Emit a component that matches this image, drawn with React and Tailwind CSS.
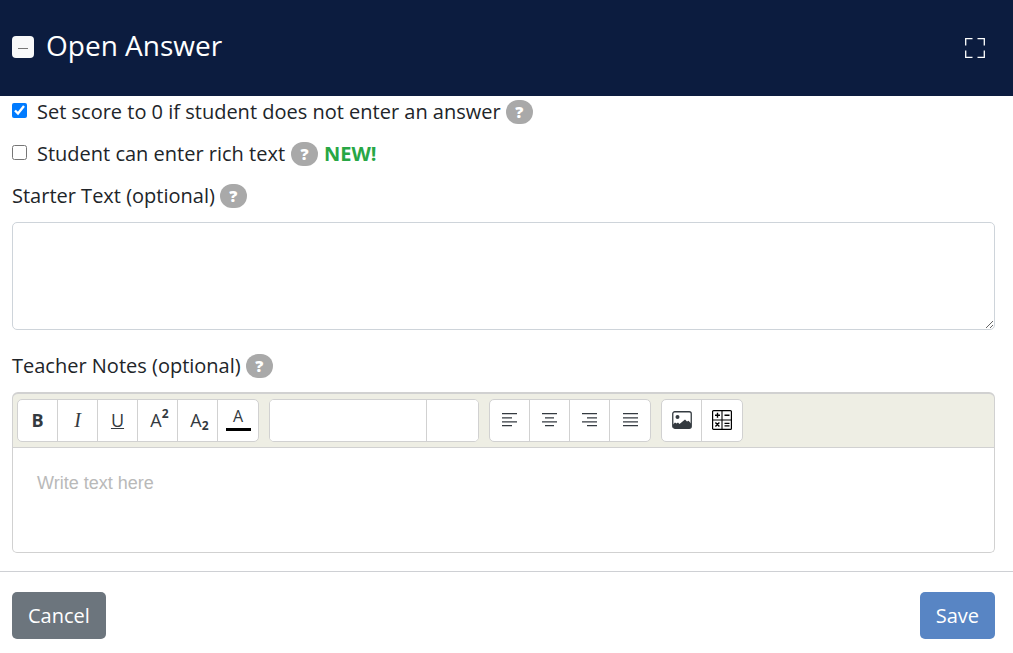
import React, { useState } from 'react';

const HelpBadge = ({ label }) => (
    <button
        type="button"
        aria-label={label}
        className="inline-flex h-6 w-[27px] shrink-0 items-center justify-center rounded-full bg-[#a9a9a9] text-base leading-6 font-extrabold text-white"
    >
        ?
    </button>
);

const ToolGroup = ({ children }) => (
    <div className="flex h-[43px] divide-x divide-[#d1d1d1] overflow-hidden rounded-[5px] border border-[#d1d1d1] bg-white">
        {children}
    </div>
);

const ToolButton = ({ label, children }) => (
    <button
        type="button"
        aria-label={label}
        className="flex w-10 items-center justify-center pb-0.5 text-lg leading-6 text-[#343a40] hover:bg-gray-50"
    >
        {children}
    </button>
);

// each row of an alignment icon is [start, end]
const alignments = [
    { label: 'Align left', rows: [[0, 15], [0, 10], [0, 15], [0, 10]] },
    { label: 'Align center', rows: [[0, 15], [3, 12], [0, 15], [3, 12]] },
    { label: 'Align right', rows: [[0, 15], [5, 15], [0, 15], [5, 15]] },
    { label: 'Justify', rows: [[0, 15], [0, 15], [0, 15], [0, 15]] },
];

const AlignIcon = ({ rows }) => (
    <svg width="15" height="14" viewBox="0 0 15 14" fill="none" stroke="#343a40" strokeWidth="1.3">
        {rows.map(([start, end], i) => (
            <path key={i} d={`M${start} ${[0.7, 4.9, 8.9, 12.6][i]}H${end}`} />
        ))}
    </svg>
);

const ImageIcon = () => (
    <svg width="20" height="18" viewBox="0 0 20 18" fill="none">
        <rect x="0.75" y="0.75" width="18.5" height="16.5" rx="2" stroke="#343a40" strokeWidth="1.3" />
        <circle cx="5.5" cy="6" r="2" fill="#343a40" />
        <path d="M1 13.5L3 11.5L4.5 12.5L6 11.5L7.5 13L13 8.5L15 10.5L16.5 9.8L19 12.5V16L18 17H2L1 16Z" fill="#343a40" />
    </svg>
);

const MathIcon = () => (
    <svg width="20" height="20" viewBox="0 0 20 20" fill="none" stroke="#000" strokeWidth="1.4">
        <rect x="0.6" y="0.6" width="18.8" height="18.8" rx="1" strokeWidth="1.2" />
        <path d="M10 1V19M1 10H19" strokeWidth="1.1" />
        <path d="M3 5.3H8M5.5 2.8V7.8M12.5 5.3H17.5M3.4 12.4L7.4 16.4M7.4 12.4L3.4 16.4M12.5 13.4H17.5M12.5 15.9H17.5" />
    </svg>
);

const App = () => {
    const [zeroScore, setZeroScore] = useState(true);
    const [richText, setRichText] = useState(false);

    return (
        <div className="bg-white font-['Open_Sans',sans-serif] text-xl leading-[30px] text-[#212529]">
            <header className="flex h-24 items-center justify-between bg-[#0c1c3f] pr-7 pl-3 text-white">
                <div className="flex items-center gap-3 pb-0.5">
                    <button
                        type="button"
                        aria-label="Collapse"
                        className="flex h-[22px] w-[22px] items-center justify-center rounded-sm bg-[#f8f9fa]"
                    >
                        <svg width="10" height="4" viewBox="0 0 10 4">
                            <path d="M0 3.5H10" stroke="#777" strokeWidth="1" />
                        </svg>
                    </button>
                    <h1 className="pb-1 text-[28px] leading-9">Open Answer</h1>
                </div>
                <button type="button" aria-label="Full screen">
                    <svg width="20" height="20" viewBox="0 0 20 20" fill="none" stroke="#fff" strokeWidth="1.3">
                        <path d="M0.7 7.5V0.7H7.5M12.5 0.7H19.3V7.5M19.3 12.5V19.3H12.5M7.5 19.3H0.7V12.5" />
                    </svg>
                </button>
            </header>

            <main className="pt-px pr-[18px] pb-[18px] pl-3">
                <div className="mb-3 flex items-center gap-[5px]">
                    <label className="flex items-start gap-2.5">
                        <input
                            type="checkbox"
                            checked={zeroScore}
                            onChange={(e) => setZeroScore(e.target.checked)}
                            className="mt-1.5 h-[15px] w-[15px] accent-[#007bff]"
                        />
                        Set score to 0 if student does not enter an answer
                    </label>
                    <HelpBadge label="Help on empty answers" />
                </div>
                <div className="mb-3 flex items-center gap-1.5">
                    <label className="flex items-start gap-2.5">
                        <input
                            type="checkbox"
                            checked={richText}
                            onChange={(e) => setRichText(e.target.checked)}
                            className="mt-1.5 h-[15px] w-[15px] accent-[#007bff]"
                        />
                        Student can enter rich text
                    </label>
                    <HelpBadge label="Help on rich text" />
                    <span className="font-bold text-[#28a745]">NEW!</span>
                </div>

                <div className="flex items-center gap-[5px]">
                    <label htmlFor="starter">Starter Text (optional)</label>
                    <HelpBadge label="Help on starter text" />
                </div>
                <textarea
                    id="starter"
                    className="mt-[11px] mb-[21px] block h-[108px] w-full resize-y rounded-[5px] border border-[#ced4da] px-4 py-2"
                />

                <div className="flex items-center gap-[5px]">
                    <label htmlFor="notes">Teacher Notes (optional)</label>
                    <HelpBadge label="Help on teacher notes" />
                </div>
                <div className="mt-[11px]">
                    <div className="flex flex-wrap gap-2.5 rounded-t-md border border-t-2 border-[#d1d1d1] bg-[#eeeee4] px-1 py-[5px]">
                        <ToolGroup>
                            <ToolButton label="Bold"><b>B</b></ToolButton>
                            <ToolButton label="Italic"><i className="font-['Liberation_Serif',serif] text-xl leading-6">I</i></ToolButton>
                            <ToolButton label="Underline"><u>U</u></ToolButton>
                            <ToolButton label="Superscript">
                                <span className="flex items-start pl-1">A<sup className="top-0 text-xs leading-3 font-bold">2</sup></span>
                            </ToolButton>
                            <ToolButton label="Subscript">
                                <span className="flex items-end pl-1">A<sub className="bottom-0 text-xs leading-3 font-bold">2</sub></span>
                            </ToolButton>
                            <ToolButton label="Text color">
                                <span className="flex w-[25px] flex-col items-center border-b-3 border-black pb-1 text-base leading-4">A</span>
                            </ToolButton>
                        </ToolGroup>
                        <ToolGroup>
                            <select aria-label="Font" className="w-[157px] appearance-none bg-white" />
                            <select aria-label="Size" className="w-[51px] appearance-none bg-white" />
                        </ToolGroup>
                        <ToolGroup>
                            {alignments.map(({ label, rows }) => (
                                <ToolButton key={label} label={label}><AlignIcon rows={rows} /></ToolButton>
                            ))}
                        </ToolGroup>
                        <ToolGroup>
                            <ToolButton label="Insert image"><ImageIcon /></ToolButton>
                            <ToolButton label="Insert formula"><MathIcon /></ToolButton>
                        </ToolGroup>
                    </div>
                    <textarea
                        id="notes"
                        placeholder="Write text here"
                        className="block h-[105px] w-full resize-none rounded-b-[5px] border border-t-0 border-[#d1d1d1] px-6 py-[23px] font-['Liberation_Sans',sans-serif] text-lg leading-6 placeholder:text-[#b9b9b9]"
                    />
                </div>
            </main>

            <footer className="flex justify-between border-t border-[#ced0d4] pt-5 pr-[18px] pb-3.5 pl-3 text-white">
                <button type="button" className="h-[47px] rounded-[5px] bg-[#6c757d] px-4">Cancel</button>
                <button type="button" className="h-[47px] rounded-[5px] bg-[#5885c4] px-4">Save</button>
            </footer>
        </div>
    );
};

export default App;
